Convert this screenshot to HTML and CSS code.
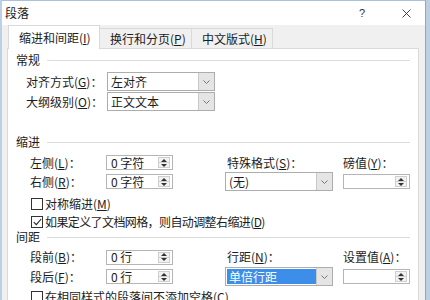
FILE: index.html
```html
<!DOCTYPE html>
<html lang="zh-CN">
<head>
<meta charset="utf-8">
<title>段落</title>
<link rel="stylesheet" href="styles.css">
</head>
<body>
<div class="win">
  <div class="titlebar">
    <span class="title">段落</span>
    <span class="help">?</span>
    <svg class="close" width="9" height="9" viewBox="0 0 9 9"><path d="M0.5 0.5L8.5 8.5M8.5 0.5L0.5 8.5" stroke="#444" stroke-width="1" fill="none"/></svg>
  </div>
  <div class="tabs">
    <div class="tab tab1 active">缩进和间距(<u>I</u>)</div>
    <div class="tab tab2">换行和分页(<u>P</u>)</div>
    <div class="tab tab3">中文版式(<u>H</u>)</div>
  </div>
  <div class="panel">
    <div class="head"><span>常规</span><i class="rule"></i></div>
    <div class="general">
      <div class="grow">
        <span class="glabel">对齐方式(<u>G</u>)：</span>
        <div class="combo gcombo"><span class="val">左对齐</span><span class="arrow"><svg width="7" height="4" viewBox="0 0 7 4"><path d="M0.5 0.5L3.5 3.5L6.5 0.5" stroke="#777" fill="none"/></svg></span></div>
      </div>
      <div class="grow">
        <span class="glabel">大纲级别(<u>O</u>)：</span>
        <div class="combo gcombo"><span class="val">正文文本</span><span class="arrow"><svg width="7" height="4" viewBox="0 0 7 4"><path d="M0.5 0.5L3.5 3.5L6.5 0.5" stroke="#777" fill="none"/></svg></span></div>
      </div>
    </div>

    <div class="head head-indent"><span>缩进</span><i class="rule"></i></div>
    <div class="grid grid-indent">
      <span class="lbl">左侧(<u>L</u>)：</span>
      <div class="cell"><div class="spin"><span class="val">0 字符</span><span class="btns"><i class="up"></i><i class="dn"></i></span></div></div>
      <span class="lbl lbl2">特殊格式(<u>S</u>)：</span>
      <span class="lbl lbl3">磅值(<u>Y</u>)：</span>

      <span class="lbl">右侧(<u>R</u>)：</span>
      <div class="cell"><div class="spin"><span class="val">0 字符</span><span class="btns"><i class="up"></i><i class="dn"></i></span></div></div>
      <div class="cell"><div class="combo wcombo"><span class="val">(无)</span><span class="arrow"><svg width="7" height="4" viewBox="0 0 7 4"><path d="M0.5 0.5L3.5 3.5L6.5 0.5" stroke="#777" fill="none"/></svg></span></div></div>
      <div class="cell"><div class="spin"><span class="val"></span><span class="btns"><i class="up"></i><i class="dn"></i></span></div></div>
    </div>
    <div class="check cb1"><span class="box"></span><span>对称缩进(<u>M</u>)</span></div>
    <div class="check cb2"><span class="box"><svg width="9" height="8" viewBox="0 0 9 8"><path d="M0.8 4.2L3.3 6.6L8.2 1" stroke="#222" stroke-width="1.1" fill="none"/></svg></span><span class="longtxt">如果定义了文档网格，则自动调整右缩进(<u>D</u>)</span></div>

    <div class="head head-space"><span>间距</span><i class="rule"></i></div>
    <div class="grid grid-space">
      <span class="lbl">段前(<u>B</u>)：</span>
      <div class="cell"><div class="spin"><span class="val">0 行</span><span class="btns"><i class="up"></i><i class="dn"></i></span></div></div>
      <span class="lbl lbl2">行距(<u>N</u>)：</span>
      <span class="lbl lbl3">设置值(<u>A</u>)：</span>

      <span class="lbl">段后(<u>F</u>)：</span>
      <div class="cell"><div class="spin"><span class="val">0 行</span><span class="btns"><i class="up"></i><i class="dn"></i></span></div></div>
      <div class="cell"><div class="combo wcombo"><span class="val sel">单倍行距</span><span class="arrow"><svg width="7" height="4" viewBox="0 0 7 4"><path d="M0.5 0.5L3.5 3.5L6.5 0.5" stroke="#777" fill="none"/></svg></span></div></div>
      <div class="cell"><div class="spin"><span class="val"></span><span class="btns"><i class="up"></i><i class="dn"></i></span></div></div>
    </div>
    <div class="check cb3"><span class="box"></span><span>在相同样式的段落间不添加空格(<u>C</u>)</span></div>
  </div>
</div>
</body>
</html>
```

FILE: styles.css
```css
* { box-sizing: border-box; margin: 0; padding: 0; }
html, body { width: 430px; height: 300px; overflow: hidden; }
body {
  background: #bccfe3;
  font-family: "Noto Sans CJK SC", "Noto Sans", sans-serif;
  font-size: 12px;
  line-height: 1;
  color: #1c1c1c;
}
u { text-decoration: underline; text-underline-offset: 1px; }

.win {
  margin-left: 2px;
  width: 424px;
  height: 300px;
  background: #f0f0f0;
  border-top: 1px solid #a9c1da;
  border-right: 1px solid #8ea8c3;
}

.titlebar {
  height: 24px;
  background: #fff;
  display: flex;
  align-items: center;
  padding-left: 3px;
  padding-right: 14px;
}
.title { font-size: 12px; }
.help { margin-left: auto; margin-right: 37px; color: #333; font-family: "Liberation Sans", sans-serif; font-size: 11px; }
.close { display: block; }

.tabs {
  height: 23px;
  display: flex;
  align-items: flex-end;
  padding-left: 6px;
}
.tab {
  height: 20px;
  display: flex;
  align-items: center;
  padding-left: 10px;
  border: 1px solid #d9d9d9;
  border-bottom: none;
  background: #f0f0f0;
  white-space: nowrap;
}
.tab + .tab { border-left: none; }
.tab1 { width: 92px; }
.tab2 { width: 92px; }
.tab3 { width: 81px; }
.tab.active {
  height: 24px;
  margin-bottom: -1px;
  background: #fff;
  position: relative;
  z-index: 1;
  padding-top: 1px;
}

.panel {
  margin-left: 5px;
  width: 412px;
  height: 260px;
  background: #fff;
  border: 1px solid #d9d9d9;
  padding: 4px 8px 0 8px;
}

.head {
  height: 14px;
  display: flex;
  align-items: center;
}
.rule {
  flex: 1;
  height: 1px;
  background: #dcdcdc;
  margin-left: 7px;
}
.head-indent { margin-top: 24px; }
.head-space { margin-top: 0; }

.general {
  margin-top: 5px;
  display: flex;
  flex-direction: column;
  gap: 1px;
}
.grow {
  height: 19px;
  display: flex;
  align-items: center;
  padding-left: 10px;
}
.glabel { width: 81px; white-space: nowrap; }

.combo {
  height: 19px;
  display: flex;
  align-items: stretch;
  border: 1px solid #adadad;
  background: #fff;
}
.combo .val {
  flex: 1;
  display: flex;
  align-items: center;
  padding-left: 3px;
  white-space: nowrap;
}
.combo .val.sel {
  margin: 1px 0 1px 1px;
  padding-left: 2px;
  background: #3d8ee8;
  color: #fff;
}
.combo .arrow {
  width: 16px;
  display: flex;
  align-items: center;
  justify-content: center;
  background: #e5e5e5;
  border-left: 1px solid #c8c8c8;
}
.gcombo { width: 108px; }
.wcombo { width: 108px; }

.grid {
  display: grid;
  grid-template-columns: 76px 119px 118px 67px;
  margin-left: 14px;
  row-gap: 1px;
  align-items: center;
}
.grid-indent { margin-top: 5px; grid-template-rows: 17px 19px; }
.grid-space { margin-top: 5px; grid-template-rows: 16px 19px; row-gap: 2px; }
.lbl { white-space: nowrap; }
.lbl2 { padding-left: 2px; }
.lbl3 { grid-column: 4; }
.grid-indent .lbl2, .grid-space .lbl2 { grid-column: 3; }
.cell { display: flex; align-items: center; }

.spin {
  width: 67px;
  height: 15px;
  display: flex;
  align-items: stretch;
  border: 1px solid #b5b5b5;
  background: #fff;
}
.spin .val {
  flex: 1;
  display: flex;
  align-items: center;
  padding-left: 4px;
  white-space: pre;
}
.btns {
  width: 12px;
  margin: 1px 2px 1px 0;
  display: flex;
  flex-direction: column;
  border: 1px solid #cfcfcf;
  background: #f2f2f2;
}
.btns i {
  flex: 1;
  display: flex;
  align-items: center;
  justify-content: center;
}
.btns i + i { border-top: 1px solid #cfcfcf; }
.btns .up::before {
  content: "";
  border-left: 3px solid transparent;
  border-right: 3px solid transparent;
  border-bottom: 3px solid #333;
}
.btns .dn::before {
  content: "";
  border-left: 3px solid transparent;
  border-right: 3px solid transparent;
  border-top: 3px solid #333;
}

.check {
  height: 16px;
  display: flex;
  align-items: center;
  margin-left: 15px;
  white-space: nowrap;
}
.check .box {
  width: 12px;
  height: 12px;
  border: 1px solid #333;
  background: #fff;
  margin-right: 2px;
  display: flex;
  align-items: center;
  justify-content: center;
}
.cb1 { margin-top: 5px; }
.cb2 { margin-top: 2px; }
.cb3 { margin-top: 3px; }
.longtxt { letter-spacing: -0.6px; }
```
